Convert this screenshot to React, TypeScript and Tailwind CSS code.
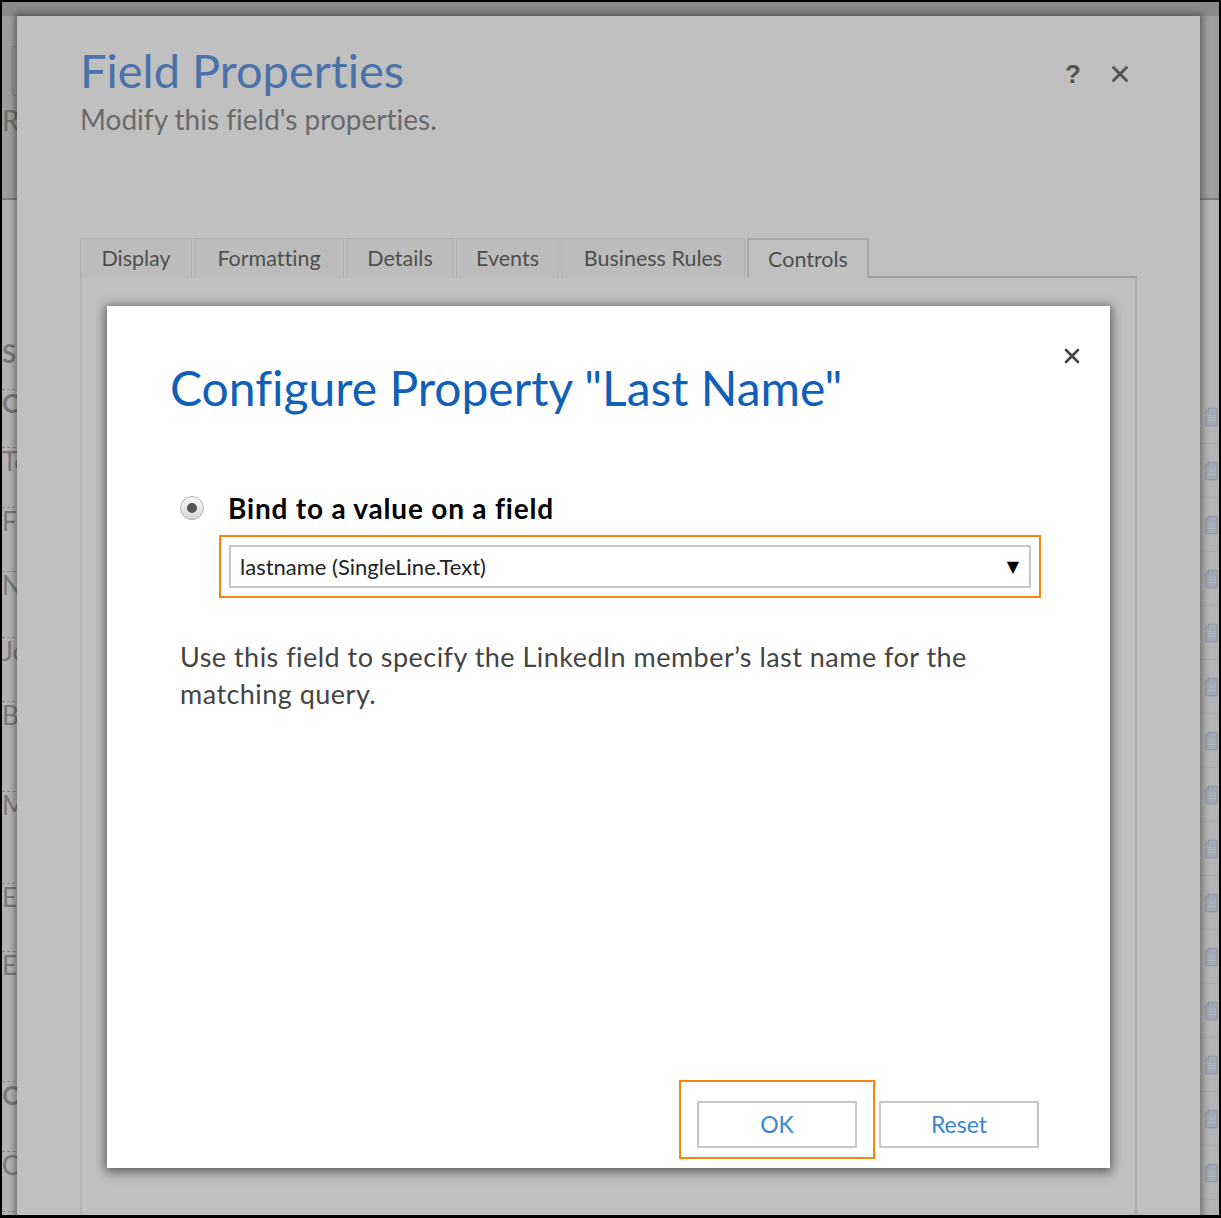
import { X } from "lucide-react";

const tabs = [
  { label: "Display", w: "w-[112px]" },
  { label: "Formatting", w: "w-[150px]" },
  { label: "Details", w: "w-[108px]" },
  { label: "Events", w: "w-[103px]" },
  { label: "Business Rules", w: "w-[184px]" },
];

const leftRows = [
  { text: "Subject", h: "h-[50px]", bold: true },
  { text: "Owner", h: "h-[58px]", bold: true },
  { text: "Topic", h: "h-[60px]", bold: false },
  { text: "First Name", h: "h-[64px]", bold: false },
  { text: "Name", h: "h-[66px]", bold: false },
  { text: "Job Title", h: "h-[64px]", bold: false },
  { text: "Business Phone", h: "h-[90px]", bold: false },
  { text: "Mobile Phone", h: "h-[92px]", bold: false },
  { text: "Email", h: "h-[68px]", bold: false },
  { text: "Email", h: "h-[130px]", bold: false },
  { text: "Company", h: "h-[70px]", bold: true },
  { text: "Company Name", h: "h-[60px]", bold: false },
];

function DocIcon() {
  return (
    <svg width="16" height="22" viewBox="0 0 16 22" className="ml-[6px]">
      <path d="M4 1h10v20H1V4z" fill="#a3a8b6" stroke="#8e94a4" strokeWidth="1" />
      <path d="M1 4h3V1" fill="none" stroke="#8e94a4" strokeWidth="1" />
      <path d="M4 9h9M4 12h9M4 15h9" stroke="#b6bac6" strokeWidth="1" />
    </svg>
  );
}

export default function App() {
  return (
    <div className="relative w-[1221px] h-[1218px] overflow-hidden border-2 border-b-[3px] border-black bg-[#b3b3b3] font-['Lato','Open_Sans',sans-serif] [font-variant-ligatures:none]">
      {/* page behind the dialog */}
      <div className="flex flex-col h-full">
        <div className="h-[198px] shrink-0 bg-[#9d9d9d] border-b-2 border-[#7d7d7d] flex flex-col">
          <div className="h-[14px] bg-[#8a8a8a]" />
          <div className="ml-[10px] mt-[30px] w-[40px] h-[50px] border border-[#8a8a8a] rounded-[2px]" />
          <div className="mt-[10px] text-[28px] leading-none text-[#6f6f6f]">Record</div>
        </div>
        <div className="flex flex-1 justify-between">
          <div className="flex flex-col pt-[140px] w-[120px]">
            {leftRows.map((r, i) => (
              <div key={i} className={`${r.h} flex flex-col border-b border-dashed border-[#8a8a8a]`}>
                <span
                  className={`text-[26px] leading-none text-[#7a7a7a] whitespace-nowrap ${r.bold ? "font-bold" : ""}`}
                >
                  {r.text}
                </span>
              </div>
            ))}
          </div>
          <div className="flex flex-col pt-[190px] w-[20px]">
            {Array.from({ length: 15 }).map((_, i) => (
              <div key={i} className="h-[54px] flex items-center border-b border-[#a5abb8]">
                <DocIcon />
              </div>
            ))}
          </div>
        </div>
      </div>

      {/* Field Properties dialog */}
      <div className="absolute left-[15px] top-[14px] w-[1183px] h-[1220px] bg-[#c0c0c0] shadow-[0_0_6px_3px_rgba(0,0,0,0.35)] flex flex-col px-[63px]">
        <div className="relative pt-[24px]">
          <h1 className="text-[47px] leading-[60px] text-[#4a72a8]">Field Properties</h1>
          <p className="mt-[2px] text-[28px] leading-[34px] text-[#6a6a6a]">Modify this field's properties.</p>
          <div className="absolute right-[4px] top-[45px] flex items-center gap-[26px] text-[#555]">
            <span className="text-[26px] font-bold leading-none font-['Liberation_Sans',sans-serif]">?</span>
            <X size={26} strokeWidth={2.6} />
          </div>
        </div>

        {/* tabs */}
        <div className="mt-[102px] flex items-end h-[40px]">
          {tabs.map((t) => (
            <div
              key={t.label}
              className={`${t.w} h-[40px] mr-[2px] bg-[#bcbcbc] border border-b-0 border-[#b1b1b1] flex items-center justify-center text-[21.5px] text-[#4e4e4e]`}
            >
              {t.label}
            </div>
          ))}
          <div className="w-[122px] h-[40px] bg-[#c0c0c0] border-t-2 border-x-2 border-[#a9a9a9] flex items-center justify-center text-[21.5px] text-[#4e4e4e]">
            Controls
          </div>
          <div className="flex-1 border-b-2 border-[#9f9f9f]" />
        </div>
        <div className="flex-1 border-l-2 border-r-2 border-l-[#b3b3b3] border-r-[#adadad]" />

        {/* Configure Property dialog */}
        <div className="absolute left-[90px] top-[290px] w-[1003px] h-[862px] bg-white shadow-[0_2px_10px_2px_rgba(0,0,0,0.5)] flex flex-col">
          <button className="absolute right-[26px] top-[38px] text-[#444]">
            <X size={24} strokeWidth={2.6} />
          </button>
          <h2 className="ml-[63px] mt-[52px] text-[48px] leading-[60px] text-[#1160b7]">
            Configure Property "Last Name"
          </h2>

          <div className="ml-[73px] mt-[73px] flex items-center gap-[24px]">
            <span className="w-[24px] h-[24px] rounded-full border border-[#b3b3b3] bg-gradient-to-b from-[#f7f7f7] to-[#d7d7d7] flex items-center justify-center">
              <span className="w-[10px] h-[10px] rounded-full bg-[#555]" />
            </span>
            <span className="text-[28px] leading-[34px] font-bold tracking-[0.8px] text-black">Bind to a value on a field</span>
          </div>

          <div className="ml-[112px] mt-[10px] w-[822px] h-[63px] border-2 border-[#f7850f] px-[8px] py-[8px]">
            <div className="h-full border-2 border-[#c8c8c8] flex items-center justify-between pl-[9px] pr-[10px]">
              <span className="text-[22px] text-[#222]">lastname (SingleLine.Text)</span>
              <span className="text-[16px] text-black font-['DejaVu_Sans',sans-serif]">▼</span>
            </div>
          </div>

          <p className="ml-[73px] mt-[40px] w-[840px] text-[27px] leading-[37px] tracking-[0.47px] text-[#444]">
            Use this field to specify the LinkedIn member’s last name for the matching query.
          </p>

          <div className="flex-1" />

          <div className="flex justify-end items-end pr-[71px] pb-[9px]">
            <div className="border-2 border-[#f7850f] px-[16px] pt-[19px] pb-[9px]">
              <button className="block w-[160px] h-[47px] border-2 border-[#c8c8c8] bg-white text-[23px] text-[#3a86d6]">OK</button>
            </div>
            <button className="ml-[4px] mb-[11px] w-[160px] h-[47px] border-2 border-[#c8c8c8] bg-white text-[23px] text-[#3a86d6]">Reset</button>
          </div>
        </div>
      </div>
    </div>
  );
}
